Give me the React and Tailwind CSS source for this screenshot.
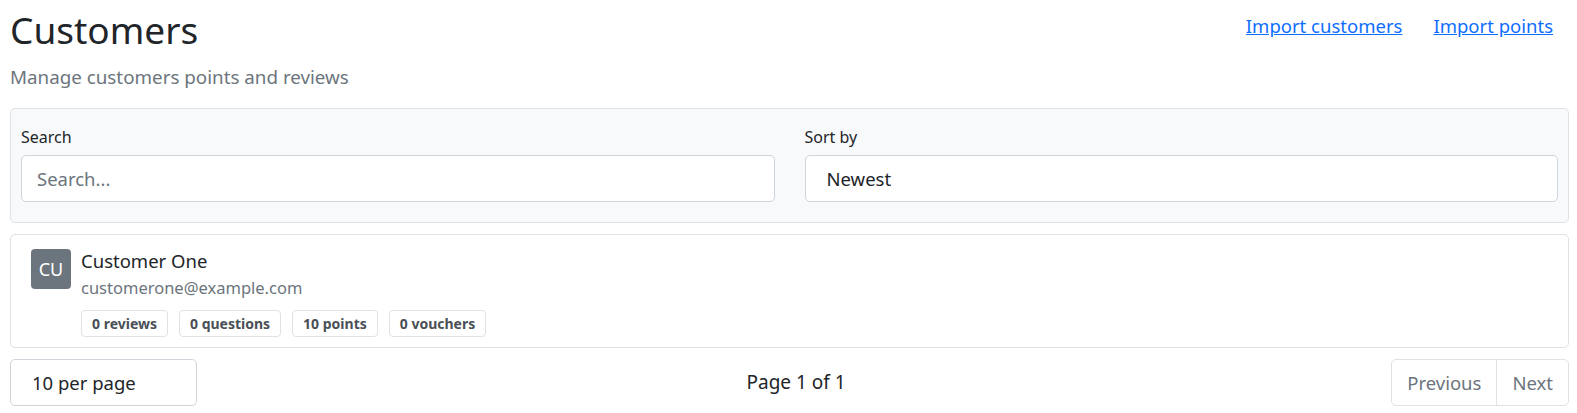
export default function App() {
  const badges = ['0 reviews', '0 questions', '10 points', '0 vouchers'];

  return (
    <div className="min-h-screen bg-white pl-[10px] pr-[8px] pt-[6px] text-[#212529]" style={{ fontFamily: '"Noto Sans", "Open Sans", sans-serif' }}>
      <div className="flex items-start justify-between">
        <div>
          <h1 className="text-[37px] leading-[48px] font-normal">Customers</h1>
          <p className="mt-[10px] text-[18.8px] leading-[26px] text-[#6c757d]">Manage customers points and reviews</p>
        </div>
        <div className="flex gap-[31px] pt-[6px] pr-[16px]">
          <a href="#" className="text-[18.5px] text-[#0d6efd] underline">Import customers</a>
          <a href="#" className="text-[18.5px] text-[#0d6efd] underline">Import points</a>
        </div>
      </div>

      <div className="mt-[18px] grid grid-cols-2 gap-[30px] rounded-[5px] border border-[#dee2e6] bg-[#f8f9fa] px-[10px] pt-[16px] pb-[20px]">
        <div>
          <label className="block text-[16px] leading-[24px]">Search</label>
          <input
            placeholder="Search..."
            className="mt-[6px] h-[47px] w-full rounded-[5px] border border-[#ced4da] bg-white px-[15px] text-[18.5px] placeholder:text-[#6c757d] outline-none"
          />
        </div>
        <div>
          <label className="block text-[16px] leading-[24px]">Sort by</label>
          <div className="mt-[6px] flex h-[47px] w-full items-center rounded-[5px] border border-[#ced4da] bg-white px-[21px] text-[18.5px]">
            Newest
          </div>
        </div>
      </div>

      <div className="mt-[11px] flex gap-[10px] rounded-[5px] border border-[#dee2e6] bg-white px-[20px] pt-[14px] pb-[10px]">
        <div className="flex h-[40px] w-[40px] items-center justify-center rounded-[4px] bg-[#6c757d] text-[18px] text-white">CU</div>
        <div>
          <div className="-mt-[1px] text-[18.5px] leading-[26px]">Customer One</div>
          <div className="mt-[1px] text-[16.5px] leading-[26px] text-[#6c757d]">customerone@example.com</div>
          <div className="mt-[9px] flex gap-[11px]">
            {badges.map((b) => (
              <span key={b} className="flex h-[27px] items-center rounded-[4px] border border-[#dee2e6] px-[10px] text-[14px] font-bold text-[#495057]">
                {b}
              </span>
            ))}
          </div>
        </div>
      </div>

      <div className="mt-[11px] flex items-center justify-between">
        <div className="flex h-[47px] w-[187px] items-center rounded-[5px] border border-[#ced4da] px-[21px] text-[18.5px]">10 per page</div>
        <div className="pl-[4px] text-[19px]">Page 1 of 1</div>
        <div className="flex h-[47px] rounded-[5px] border border-[#dee2e6] text-[18.5px] text-[#6c757d]">
          <span className="flex items-center border-r border-[#dee2e6] px-[15px]">Previous</span>
          <span className="flex items-center px-[15px]">Next</span>
        </div>
      </div>
    </div>
  );
}
